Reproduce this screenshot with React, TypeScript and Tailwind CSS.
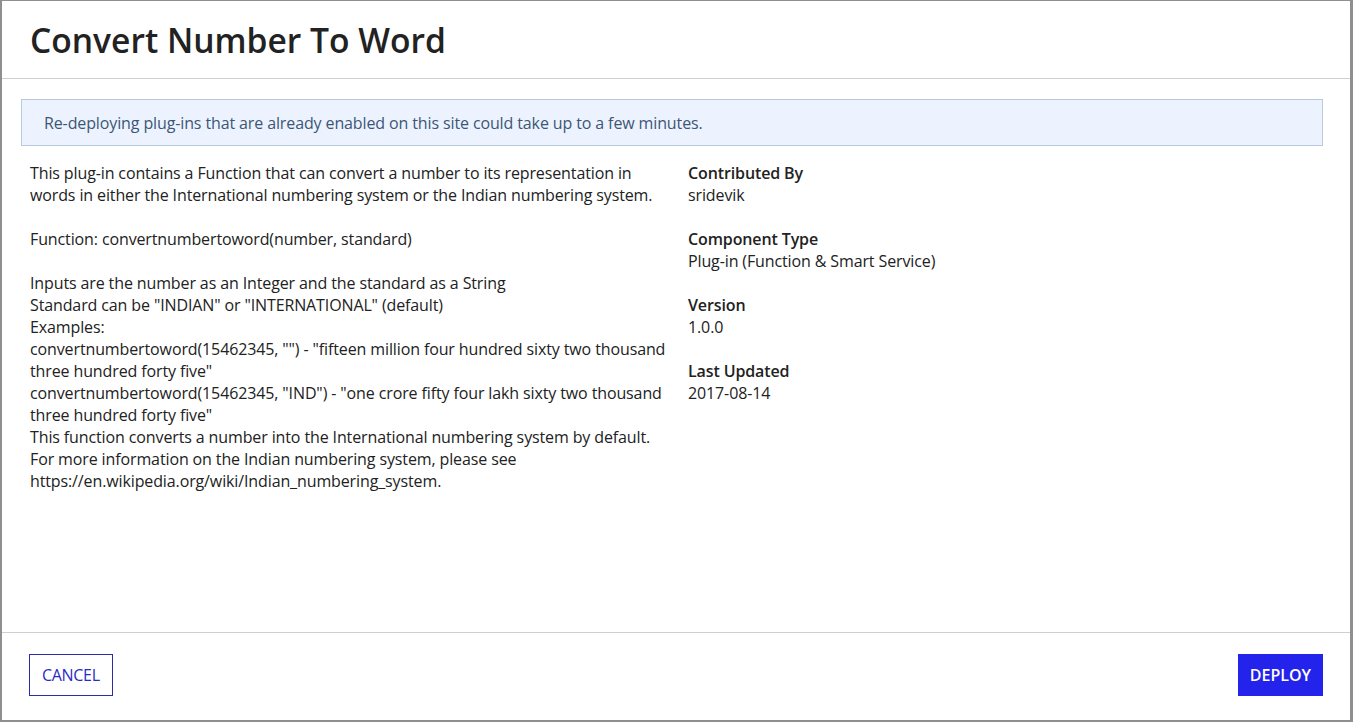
import React from 'react';

const meta = [
  { label: 'Contributed By', value: 'sridevik' },
  { label: 'Component Type', value: 'Plug-in (Function & Smart Service)' },
  { label: 'Version', value: '1.0.0' },
  { label: 'Last Updated', value: '2017-08-14' },
];

const App: React.FC = () => {
  return (
    <div className="w-[1353px] h-[722px] bg-[#8f8f8f] overflow-hidden" style={{ fontFamily: '"Open Sans", sans-serif' }}>
      <div className="ml-[2px] mt-[1px] w-[1348px] h-[719px] bg-white flex flex-col">
        {/* Header */}
        <div className="h-[78px] border-b border-[#cfcfcf] flex items-center pl-[28px] pr-[28px] pt-[1px]">
          <h1 className="text-[33.6px] font-semibold text-[#222]">Convert Number To Word</h1>
        </div>

        {/* Body */}
        <div className="flex-1 pl-[19px] pr-[27px] pt-[20px] tracking-[-0.12px]">
          <div className="border border-[#b7c9dc] bg-[#ecf3fe] h-[47px] flex items-center px-[22px] text-[16px] text-[#3d5677]">
            Re-deploying plug-ins that are already enabled on this site could take up to a few minutes.
          </div>

          <div className="flex gap-[13px] pt-[16px] px-[9px] text-[16px] leading-[22px] text-[#222]">
            <div className="w-[645px]">
              <p>This plug-in contains a Function that can convert a number to its representation in words in either the International numbering system or the Indian numbering system.</p>
              <p className="mt-[22px]">Function: convertnumbertoword(number, standard)</p>
              <p className="mt-[22px]">
                Inputs are the number as an Integer and the standard as a String
                <br />
                Standard can be "INDIAN" or "INTERNATIONAL" (default)
                <br />
                Examples:
                <br />
                convertnumbertoword(15462345, "") - "fifteen million four hundred sixty two thousand three hundred forty five"
                <br />
                convertnumbertoword(15462345, "IND") - "one crore fifty four lakh sixty two thousand three hundred forty five"
                <br />
                This function converts a number into the International numbering system by default. For more information on the Indian numbering system, please see https://en.wikipedia.org/wiki/Indian_numbering_system.
              </p>
            </div>
            <div className="flex flex-col gap-[22px]">
              {meta.map((m) => (
                <div key={m.label}>
                  <div className="font-semibold">{m.label}</div>
                  <div>{m.value}</div>
                </div>
              ))}
            </div>
          </div>
        </div>

        {/* Footer */}
        <div className="h-[88px] border-t border-[#cfcfcf] flex items-start justify-between pt-[21px] pl-[27px] pr-[27px]">
          <button className="h-[42px] px-[12px] border border-[#2c2ca8] text-[#2b2bc4] text-[16px] font-medium bg-white tracking-[-0.3px]">
            CANCEL
          </button>
          <button className="h-[42px] px-[12px] bg-[#2323ec] text-white text-[16px] font-semibold">
            DEPLOY
          </button>
        </div>
      </div>
    </div>
  );
};

export default App;
